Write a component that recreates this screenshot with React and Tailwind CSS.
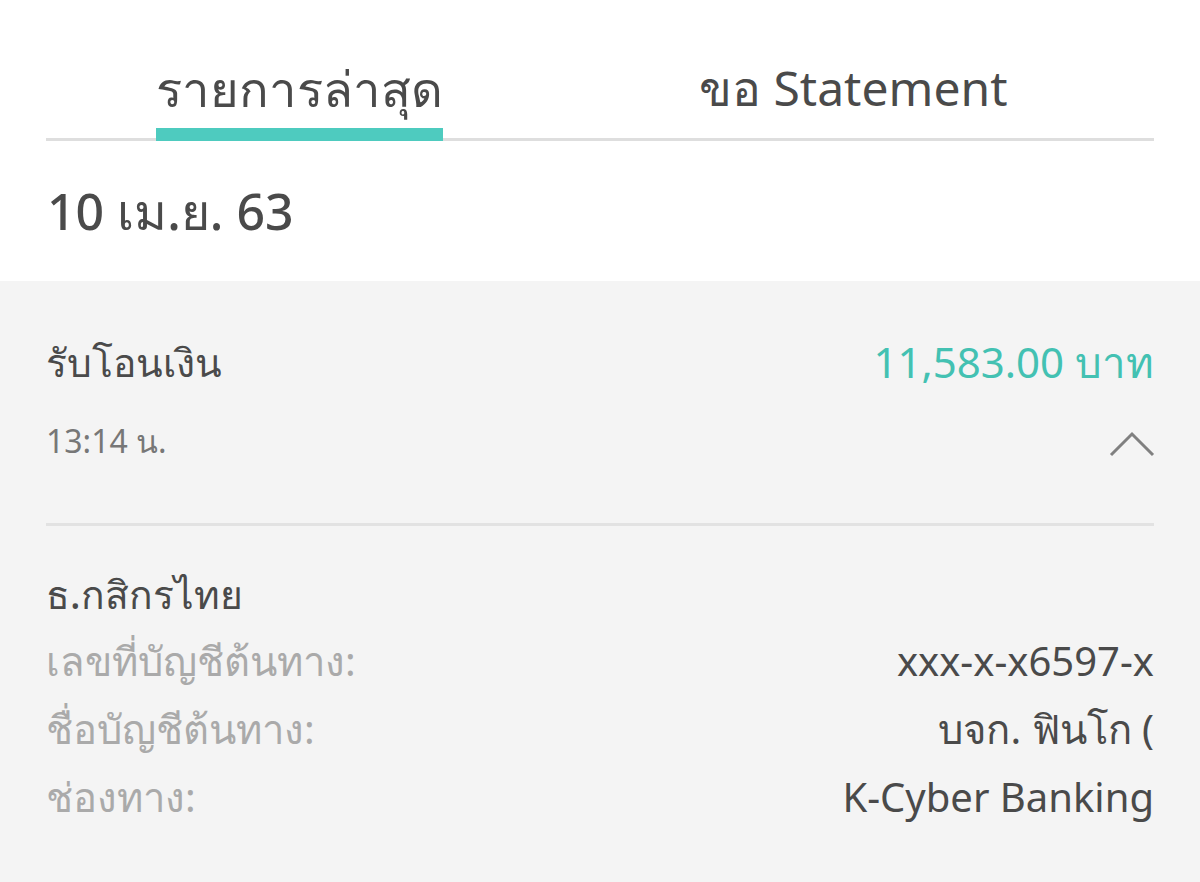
const rows = [
  { label: 'เลขที่บัญชีต้นทาง:', value: 'xxx-x-x6597-x' },
  { label: 'ชื่อบัญชีต้นทาง:', value: 'บจก. ฟินโก (' },
  { label: 'ช่องทาง:', value: 'K-Cyber Banking' },
];

export default function App() {
  return (
    <div
      className="w-[1200px] h-[882px] overflow-hidden bg-white flex flex-col text-[#4a4a4a]"
      style={{ fontFamily: '"Noto Sans", "Open Sans", sans-serif' }}
    >
      {/* Tabs */}
      <div className="mx-[46px] pt-[58px] border-b-[3px] border-[#dedede]">
        <div className="-ml-[23px] w-[1107px] grid grid-cols-2">
          <div className="flex justify-center">
            <div className="flex flex-col items-stretch">
              <span className="text-[49px] leading-[60px] font-medium text-center">รายการล่าสุด</span>
              <div className="h-[13px] bg-[#4ecbbf] mt-[10px] -mb-[3px]" />
            </div>
          </div>
          <div className="flex justify-center">
            <span className="text-[48px] leading-[60px] text-center">ขอ Statement</span>
          </div>
        </div>
      </div>

      {/* Date */}
      <div className="px-[47px] h-[140px] flex items-center">
        <span className="text-[50px] font-medium">10 เม.ย. 63</span>
      </div>

      {/* Transaction */}
      <div className="flex-1 bg-[#f4f4f4] px-[46px]">
        <div className="pt-[56px] flex items-center justify-between">
          <span className="text-[39px] leading-[50px] font-medium">รับโอนเงิน</span>
          <span className="text-[42px] leading-[50px] text-[#43c1b2]">11,583.00 บาท</span>
        </div>
        <div className="mt-[32px] h-[44px] flex items-center justify-between">
          <span className="text-[32px] text-[#777]">13:14 น.</span>
          <svg width="46" height="26" viewBox="0 0 46 26" className="mr-[-1px] mt-[6px]">
            <polyline points="2,24 23,3 44,24" fill="none" stroke="#808080" strokeWidth="3" />
          </svg>
        </div>
        <div className="mt-[60px] h-[3px] bg-[#e2e2e2]" />
        <div className="pt-[43px]">
          <div className="text-[39px] leading-[50px] font-medium">ธ.กสิกรไทย</div>
          <div className="mt-[17px] flex flex-col gap-[18px]">
            {rows.map((r) => (
              <div key={r.label} className="flex items-center justify-between h-[50px]">
                <span className="text-[40px] text-[#aaaaaa]">{r.label}</span>
                <span className="text-[40px]">{r.value}</span>
              </div>
            ))}
          </div>
        </div>
      </div>
    </div>
  );
}
